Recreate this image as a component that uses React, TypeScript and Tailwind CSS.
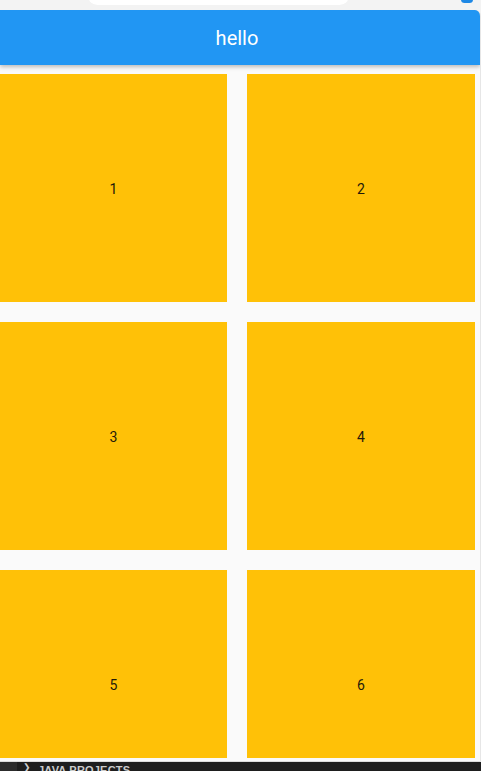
const tiles = [1, 2, 3, 4, 5, 6];

export default function App() {
  return (
    <div
      className="w-[481px] h-[771px] overflow-hidden bg-[#f3f3f3] flex flex-col"
      style={{ fontFamily: 'Roboto, "Liberation Sans", sans-serif' }}
    >
      {/* browser strip above the device */}
      <div className="relative h-[10px] shrink-0">
        <div className="absolute left-[88px] top-[-14px] w-[261px] h-[19px] rounded-full bg-white" />
        <div className="absolute left-[461px] top-[-4px] w-[12px] h-[7px] rounded-full bg-[#1e88e5]" />
      </div>

      {/* device screen */}
      <div className="h-[752px] shrink-0 flex flex-col bg-[#fafafa] border-r border-[#e6e6e6] rounded-tr-[6px] overflow-hidden">
        <div className="relative z-10 h-[55px] shrink-0 bg-[#2196f3] flex items-center justify-center shadow-[0_2px_4px_rgba(0,0,0,0.25)]">
          <span className="text-white text-[20px] leading-none -translate-x-[3px]">hello</span>
        </div>
        <div className="flex-1 border-b border-[#dcdcdc]">
          <div className="h-[693px] overflow-hidden pt-[9px]">
            <div className="grid grid-cols-[227px_228px] gap-[20px]">
              {tiles.map((n) => (
                <div
                  key={n}
                  className="h-[228px] bg-[#ffc107] flex items-center justify-center text-[14px] text-[#1f1a0a]"
                >
                  <span className="translate-y-[1px]">{n}</span>
                </div>
              ))}
            </div>
          </div>
        </div>
      </div>

      {/* editor panel peeking at the bottom */}
      <div className="flex-1 bg-[#1e1e1e] flex items-start">
        <div className="w-[17px] h-full bg-[#2c2c2c]" />
        <span className="ml-[6px] mt-[1px] text-[#cccccc] text-[9px] leading-none">❯</span>
        <span
          className="ml-[7px] mt-[3px] text-[#cccccc] text-[11px] font-bold leading-none tracking-[0.2px]"
          style={{ fontFamily: '"Liberation Sans", sans-serif' }}
        >
          JAVA PROJECTS
        </span>
      </div>
    </div>
  );
}
